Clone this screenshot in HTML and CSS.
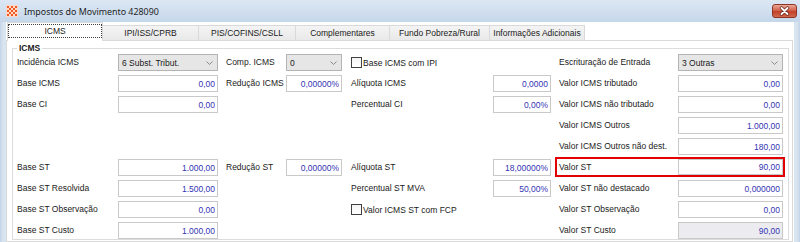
FILE: index.html
```html
<!DOCTYPE html>
<html lang="pt-BR">
<head>
    <meta charset="UTF-8">
    <meta name="viewport" content="width=device-width, initial-scale=1.0">
    <title>Impostos do Movimento 428090</title>
    <link rel="stylesheet" href="styles.css">
</head>
<body>
    <div class="janela">
        <div class="titulo">
            <svg class="icone" width="12" height="12" viewBox="0 0 12 12">
                <rect width="12" height="12" fill="#fcd9c6"/>
                <g fill="#ef5a24">
                    <rect x="1" y="1" width="2" height="2"/><rect x="5" y="1" width="2" height="2"/><rect x="9" y="1" width="2" height="2"/>
                    <rect x="3" y="3" width="2" height="2"/><rect x="7" y="3" width="2" height="2"/>
                    <rect x="1" y="5" width="2" height="2"/><rect x="5" y="5" width="2" height="2"/><rect x="9" y="5" width="2" height="2"/>
                    <rect x="3" y="7" width="2" height="2"/><rect x="7" y="7" width="2" height="2"/>
                    <rect x="1" y="9" width="2" height="2"/><rect x="5" y="9" width="2" height="2"/><rect x="9" y="9" width="2" height="2"/>
                </g>
            </svg>
            <span class="titulo-texto">Impostos do Movimento 428090</span>
            <div class="fechar">
                <svg width="23" height="12" viewBox="0 0 23 12">
                    <path d="M8.5 3 L14.5 9 M14.5 3 L8.5 9" stroke="#6e2a1e" stroke-width="3.4" stroke-linecap="round"/>
                    <path d="M8.5 3 L14.5 9 M14.5 3 L8.5 9" stroke="#fff" stroke-width="1.8" stroke-linecap="round"/>
                </svg>
            </div>
        </div>

        <div class="cliente">
            <div class="abas">
                <div class="aba ativa" style="width: 96px"><span>ICMS</span></div>
                <div class="aba" style="width: 96px">IPI/ISS/CPRB</div>
                <div class="aba" style="width: 97px">PIS/COFINS/CSLL</div>
                <div class="aba" style="width: 94px">Complementares</div>
                <div class="aba" style="width: 100px">Fundo Pobreza/Rural</div>
                <div class="aba" style="width: 95px">Informações Adicionais</div>
            </div>

            <div class="pagina">
                <fieldset class="grupo">
                    <legend>ICMS</legend>
                    <div class="grade">
                        <!-- linha 1 -->
                        <label class="rot">Incidência ICMS</label>
                        <div class="combo"><span>6 Subst. Tribut.</span><svg width="7" height="4" viewBox="0 0 7 4"><path d="M0.5 0.5 L3.5 3.5 L6.5 0.5" fill="none" stroke="#8a8a8a"/></svg></div>
                        <label class="rot c3">Comp. ICMS</label>
                        <div class="combo"><span>0</span><svg width="7" height="4" viewBox="0 0 7 4"><path d="M0.5 0.5 L3.5 3.5 L6.5 0.5" fill="none" stroke="#8a8a8a"/></svg></div>
                        <label class="check c5"><span class="caixa"></span>Base ICMS com IPI</label>
                        <label class="rot c7">Escrituração de Entrada</label>
                        <div class="combo"><span>3 Outras</span><svg width="7" height="4" viewBox="0 0 7 4"><path d="M0.5 0.5 L3.5 3.5 L6.5 0.5" fill="none" stroke="#8a8a8a"/></svg></div>

                        <!-- linha 2 -->
                        <label class="rot">Base ICMS</label>
                        <input class="campo" type="text" value="0,00" readonly>
                        <label class="rot c3">Redução ICMS</label>
                        <input class="campo" type="text" value="0,00000%" readonly>
                        <label class="rot c5">Alíquota ICMS</label>
                        <input class="campo" type="text" value="0,0000" readonly>
                        <label class="rot c7">Valor ICMS tributado</label>
                        <input class="campo" type="text" value="0,00" readonly>

                        <!-- linha 3 -->
                        <label class="rot">Base CI</label>
                        <input class="campo" type="text" value="0,00" readonly>
                        <label class="rot c5">Percentual CI</label>
                        <input class="campo" type="text" value="0,00%" readonly>
                        <label class="rot c7">Valor ICMS não tributado</label>
                        <input class="campo" type="text" value="0,00" readonly>

                        <!-- linhas 4 e 5 -->
                        <label class="rot c7">Valor ICMS Outros</label>
                        <input class="campo" type="text" value="1.000,00" readonly>
                        <label class="rot c7">Valor ICMS Outros não dest.</label>
                        <input class="campo" type="text" value="180,00" readonly>

                        <!-- linha 6 -->
                        <label class="rot">Base ST</label>
                        <input class="campo" type="text" value="1.000,00" readonly>
                        <label class="rot c3">Redução ST</label>
                        <input class="campo" type="text" value="0,00000%" readonly>
                        <label class="rot c5">Alíquota ST</label>
                        <input class="campo" type="text" value="18,00000%" readonly>
                        <div class="destaque">
                            <label class="rot">Valor ST</label>
                            <input class="campo" type="text" value="90,00" readonly>
                        </div>

                        <!-- linha 7 -->
                        <label class="rot">Base ST Resolvida</label>
                        <input class="campo" type="text" value="1.500,00" readonly>
                        <label class="rot c5">Percentual ST MVA</label>
                        <input class="campo" type="text" value="50,00%" readonly>
                        <label class="rot c7">Valor ST não destacado</label>
                        <input class="campo" type="text" value="0,000000" readonly>

                        <!-- linha 8 -->
                        <label class="rot">Base ST Observação</label>
                        <input class="campo" type="text" value="0,00" readonly>
                        <label class="check c5"><span class="caixa"></span>Valor ICMS ST com FCP</label>
                        <label class="rot c7">Valor ST Observação</label>
                        <input class="campo" type="text" value="0,00" readonly>

                        <!-- linha 9 -->
                        <label class="rot">Base ST Custo</label>
                        <input class="campo" type="text" value="1.000,00" readonly>
                        <label class="rot c7">Valor ST Custo</label>
                        <input class="campo cinza" type="text" value="90,00" readonly>
                    </div>
                </fieldset>
            </div>
        </div>
    </div>
</body>
</html>
```

FILE: styles.css
```css
* {
    box-sizing: border-box;
}
body {
    margin: 0;
    font-family: "Liberation Sans", Arial, sans-serif;
    font-size: 8.5px;
    color: #1a1a1a;
    background: #fff;
    overflow: hidden;
}
.janela {
    width: 800px;
    height: 242px;
    display: flex;
    flex-direction: column;
    background: linear-gradient(to right, #c3d3e6, #d9e4f1 3px, #d9e4f1 797px, #c3d3e6);
    overflow: hidden;
}

/* barra de titulo */
.titulo {
    height: 22px;
    flex: none;
    display: flex;
    align-items: center;
    padding: 0 3px 0 6px;
    background: linear-gradient(#dce7f4, #c6d7eb);
}
.icone {
    flex: none;
}
.titulo-texto {
    margin-left: 6px;
    font-family: "Noto Sans", "Liberation Sans", sans-serif;
    font-size: 8.9px;
    color: #1e1e1e;
}
.fechar {
    margin-left: auto;
    width: 25px;
    height: 14px;
    border: 1px solid #8f3527;
    border-radius: 3px;
    background: linear-gradient(#eaa99a, #d4624c 45%, #c2402a 55%, #d0694e);
    display: flex;
}

/* area cliente */
.cliente {
    flex: 1;
    margin: 0 6px;
    background: #fff;
    display: flex;
    flex-direction: column;
}
.abas {
    height: 18px;
    flex: none;
    display: flex;
    align-items: flex-end;
    padding-left: 1px;
}
.aba {
    height: 15px;
    border: 1px solid #d9d9d9;
    border-bottom: none;
    border-left: none;
    background: linear-gradient(#f4f4f4, #e9e9e9);
    text-align: center;
    line-height: 14px;
    white-space: nowrap;
}
.aba.ativa {
    height: 19px;
    margin-bottom: -1px;
    border-left: 1px solid #d9d9d9;
    background: #fff;
    padding: 1px 0 0;
    position: relative;
}
.aba.ativa span {
    display: block;
    height: 14px;
    border: 1px dotted #3c3c3c;
    line-height: 12px;
}
.pagina {
    flex: 1;
    margin-right: 1px;
    border: 1px solid #d9d9d9;
    padding: 2px 3px 0 5px;
}

/* grupo ICMS */
.grupo {
    margin: 0;
    border: 1px solid #dcdcdc;
    padding: 1px 0 0 4px;
}
.grupo legend {
    padding: 0 2px;
    font-weight: bold;
    line-height: 10px;
}
.grade {
    display: grid;
    grid-template-columns: 101px 100px 68px 56px 151px 58px 127px 105px;
    grid-auto-rows: 17px;
    row-gap: 4px;
}
.rot {
    line-height: 17px;
    white-space: nowrap;
}
.c3 {
    grid-column: 3;
    padding-left: 8px;
}
.c5 {
    grid-column: 5;
    padding-left: 9px;
}
.c7 {
    grid-column: 7;
    padding-left: 8px;
}
.campo {
    width: 100%;
    height: 17px;
    margin: 0;
    border: 1px solid #c9c9c9;
    padding: 0 2px;
    font: inherit;
    color: #3434b4;
    text-align: right;
    background: #fff;
    outline: none;
}
.campo.cinza {
    background: #ececf0;
}
.combo {
    display: flex;
    align-items: center;
    justify-content: space-between;
    border: 1px solid #b4b4b4;
    background: #e6e6e6;
    padding: 0 4px 0 3px;
}
.check {
    display: flex;
    align-items: center;
    white-space: nowrap;
}
.caixa {
    width: 11px;
    height: 11px;
    margin-right: 1px;
    border: 1px solid #404040;
    background: linear-gradient(#f4f4f4, #fff);
}
.destaque {
    grid-column: 7 / span 2;
    display: flex;
    height: 16px;
    margin-left: 6px;
    outline: 2px solid #e20000;
}
.destaque .rot {
    flex: 1;
    padding-left: 2px;
    line-height: 16px;
}
.destaque .campo {
    width: 105px;
    height: 16px;
}
```
